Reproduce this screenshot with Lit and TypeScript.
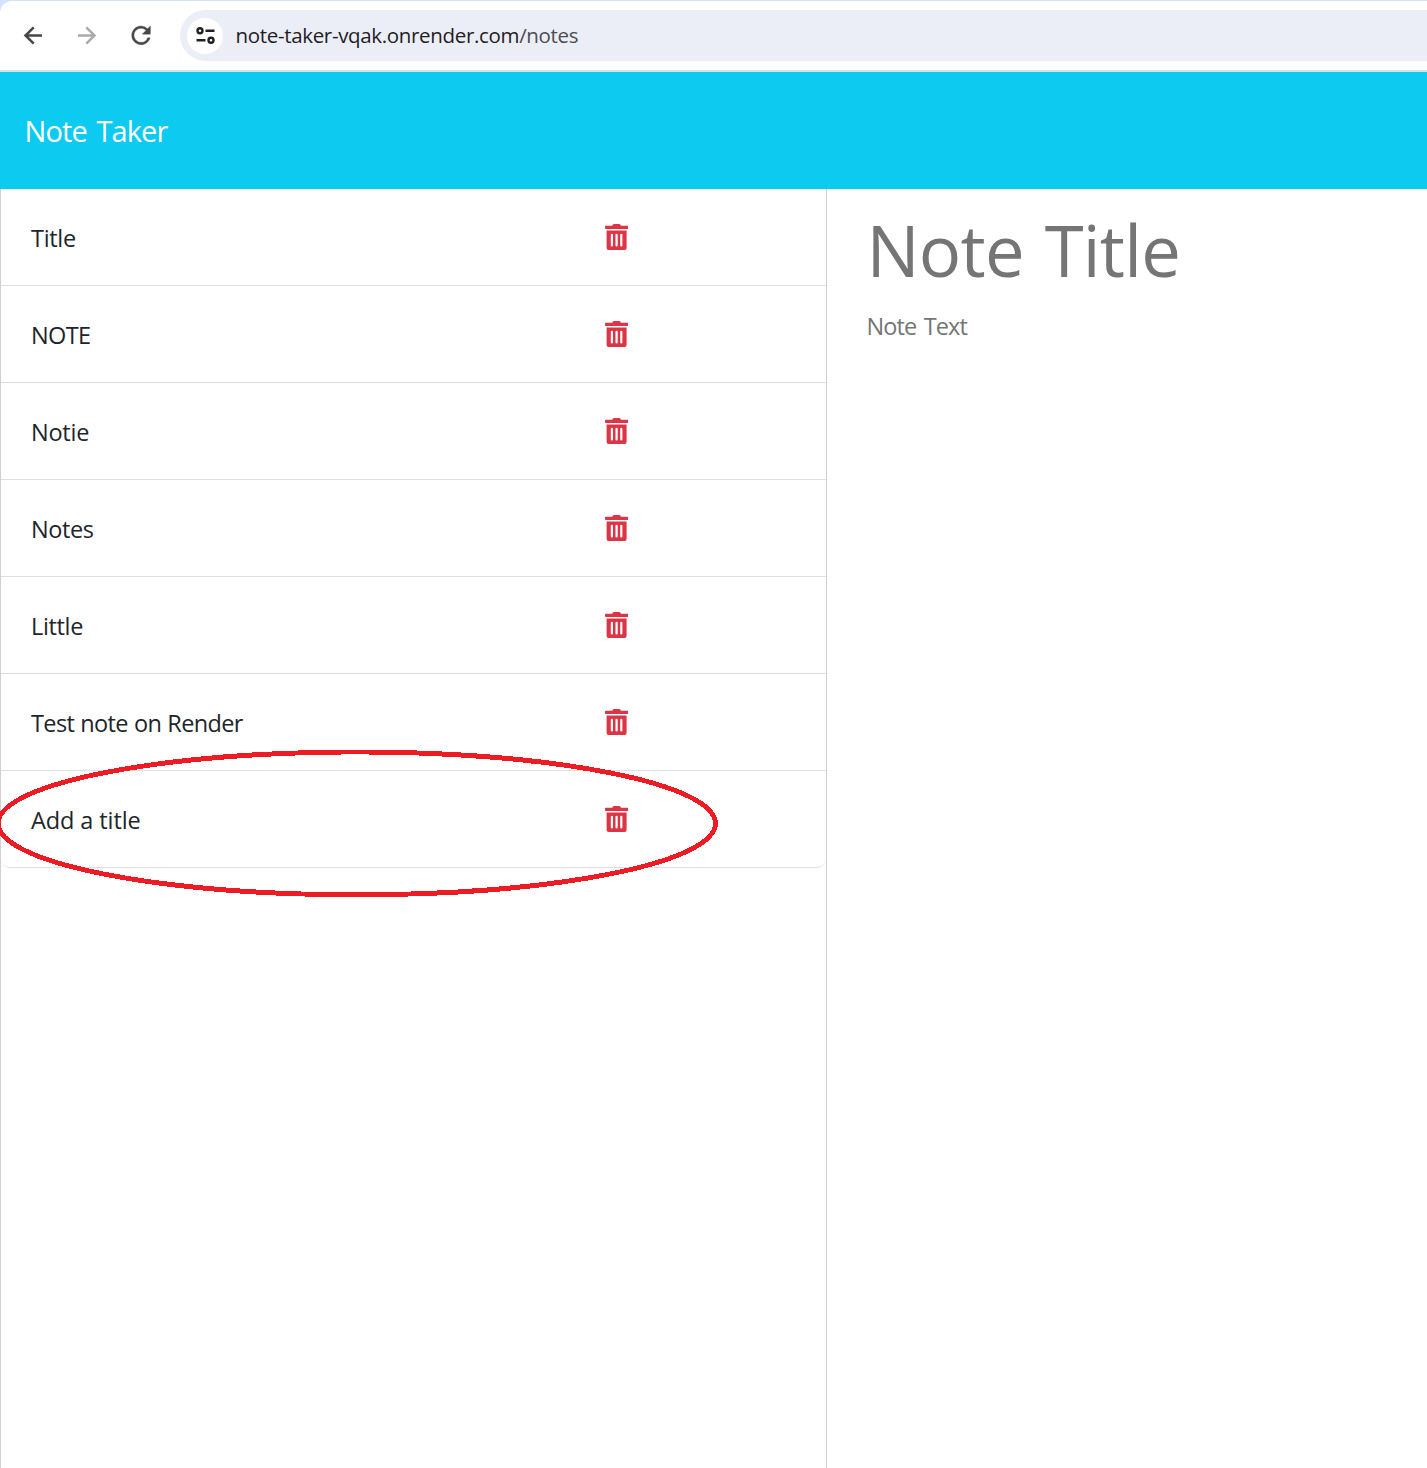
import { LitElement, html, css, svg } from "lit";
import { customElement, property } from "lit/decorators.js";

const NOTES = [
  { title: "Title", cls: "t0" },
  { title: "NOTE", cls: "t1" },
  { title: "Notie", cls: "t2" },
  { title: "Notes", cls: "t3" },
  { title: "Little", cls: "t4" },
  { title: "Test note on Render", cls: "t5" },
  { title: "Add a title", cls: "t6" },
];

const trash = svg`<path fill="currentColor" fill-rule="evenodd" d="M.8 1.7H7.2l.6-1Q8.2 0 9 0h5.200q.8 0 1.200.7L16 1.700h6.400q.8 0 .8.800V4.200q0 .8-.8.800H.8Q0 5 0 4.200V2.500Q0 1.700 .8 1.700zM1.600 6.600H21.600V24q0 2-2 2H3.600q-2 0-2-2zM6.900 9.700q-1.100 0-1.100 1V21.500q0 1 1.100 1t1.100-1V10.700q0-1-1.100-1zM11.600 9.700q-1.100 0-1.100 1V21.500q0 1 1.100 1t1.100-1V10.700q0-1-1.100-1zM16.300 9.700q-1.100 0-1.100 1V21.500q0 1 1.100 1t1.100-1V10.700q0-1-1.100-1z"/>`;

@customElement("browser-bar")
export class BrowserBar extends LitElement {
  static styles = css`
    :host { display: block; background: #d3e3fd; padding-top: 1px; height: 71px; box-sizing: content-box; }
    .bar { display: flex; align-items: center; height: 69px; background: #fff; border-top-left-radius: 12px; }
    .edge { height: 2px; background: #d9e3e6; }
    .nav { display: flex; gap: 30px; padding-left: 21px; width: 159px; box-sizing: border-box; }
    .nav svg { width: 24px; height: 24px; fill: none; flex: none; overflow: visible; }
    .omni { flex: 1; height: 51px; background: #ebeef7; border-radius: 26px 0 0 26px; display: flex; align-items: center; margin-left: 21px; }
    .site { width: 36px; height: 36px; margin-left: 7px; border-radius: 50%; background: #fff; display: flex; flex: none; }
    .url { margin-left: 12.5px; padding-bottom: 2px; font: 20.5px/30px "Open Sans", sans-serif; color: #1f2023; white-space: nowrap; letter-spacing: -0.33px; }
    .path { color: #4b4d51; }
  `;
  render() {
    return html`
      <div class="bar">
        <div class="nav">
          <svg viewBox="0 0 24 24" stroke="#474747" stroke-width="2.5"><path d="M21 11.5H5M12.7 3.3L4.5 11.5l8.2 8.2"/></svg>
          <svg viewBox="0 0 24 24" stroke="#ababab" stroke-width="2.5"><path d="M3 11.5h16M11.3 3.3l8.2 8.2-8.2 8.2"/></svg>
          <svg viewBox="0 0 24 24"><path fill="#474747" stroke="#474747" stroke-width=".3" transform="translate(-2 -2.7) scale(1.17)" d="M17.65 6.35A7.958 7.958 0 0 0 12 4c-4.42 0-7.99 3.58-7.99 8s3.57 8 7.99 8c3.73 0 6.84-2.55 7.73-6h-2.08A5.99 5.99 0 0 1 12 18c-3.31 0-6-2.69-6-6s2.69-6 6-6c1.66 0 3.14.69 4.22 1.78L13 11h7V4l-2.35 2.35z"/></svg>
        </div>
        <div class="omni">
          <div class="site">
            <svg width="36" height="36" viewBox="0 0 36 36" fill="none" stroke="#1f2023" stroke-width="2.4">
              <circle cx="13" cy="12.7" r="2.5"/><path d="M18.5 12.7H27.5M9.5 22.2h9"/><circle cx="24" cy="22.2" r="2.5"/>
            </svg>
          </div>
          <div class="url">note-taker-vqak.onrender.com<span class="path">/notes</span></div>
        </div>
      </div>
      <div class="edge"></div>
    `;
  }
}

@customElement("note-row")
export class NoteRow extends LitElement {
  @property() label = "";
  @property() fit = "";
  static styles = css`
    :host { display: flex; align-items: flex-start; height: 97px; box-sizing: border-box; border-bottom: 1px solid #dfdfdf; padding: 31px 0 0 30px; }
    .name { width: 574px; font: 23.5px/36px "Open Sans", sans-serif; color: #212529; white-space: nowrap; }
    .del { width: 23.3px; height: 26px; color: #dc3545; margin-top: 4px; }
    .t0 { letter-spacing: -0.3px; }
    .t1 { letter-spacing: -0.6px; }
    .t2 { letter-spacing: -0.25px; }
    .t3 { letter-spacing: -0.4px; }
    .t4 { letter-spacing: -0.35px; }
    .t5 { letter-spacing: -0.63px; word-spacing: 0.6px; }
    .t6 { letter-spacing: -0.1px; }
  `;
  render() {
    return html`<span class="name ${this.fit}">${this.label}</span>
      <svg class="del" viewBox="0 0 23.3 26">${trash}</svg>`;
  }
}

@customElement("app-root")
export class AppRoot extends LitElement {
  static styles = css`
    :host { display: block; position: relative; width: 1427px; height: 1468px; overflow: hidden; background: #fff; font-family: "Open Sans", sans-serif; }
    .head { height: 117px; box-sizing: border-box; background: #0dcaf0; padding: 37px 0 0 24.5px; color: #fff; font-size: 29px; line-height: 44px; letter-spacing: -0.9px; word-spacing: 3px; }
    .main { display: flex; height: 1279px; }
    .list { width: 827px; box-sizing: border-box; border: solid #cfd0d1; border-width: 0 1px; }
    note-row:last-child { border-radius: 0 0 9px 9px; }
    .editor { padding: 15px 0 0 39.5px; }
    .title { font-size: 70.6px; line-height: 92px; color: #757575; white-space: nowrap; letter-spacing: -0.8px; word-spacing: 3.5px; }
    .text { margin-top: 12px; font-size: 23.5px; line-height: 36px; color: #757575; letter-spacing: -0.9px; word-spacing: 2.2px; }
    .mark { position: absolute; left: 0; top: 740px; width: 740px; height: 170px; }
  `;
  render() {
    return html`
      <browser-bar></browser-bar>
      <div class="head">Note Taker</div>
      <div class="main">
        <div class="list">
          ${NOTES.map((n) => html`<note-row .label=${n.title} .fit=${n.cls}></note-row>`)}
        </div>
        <div class="editor">
          <div class="title">Note Title</div>
          <div class="text">Note Text</div>
        </div>
      </div>
      <svg class="mark" viewBox="0 740 740 170" shape-rendering="crispEdges">
        <ellipse cx="356.8" cy="823.4" rx="358.7" ry="71.4" fill="none" stroke="#ed1c24" stroke-width="4.8"/>
      </svg>
    `;
  }
}
